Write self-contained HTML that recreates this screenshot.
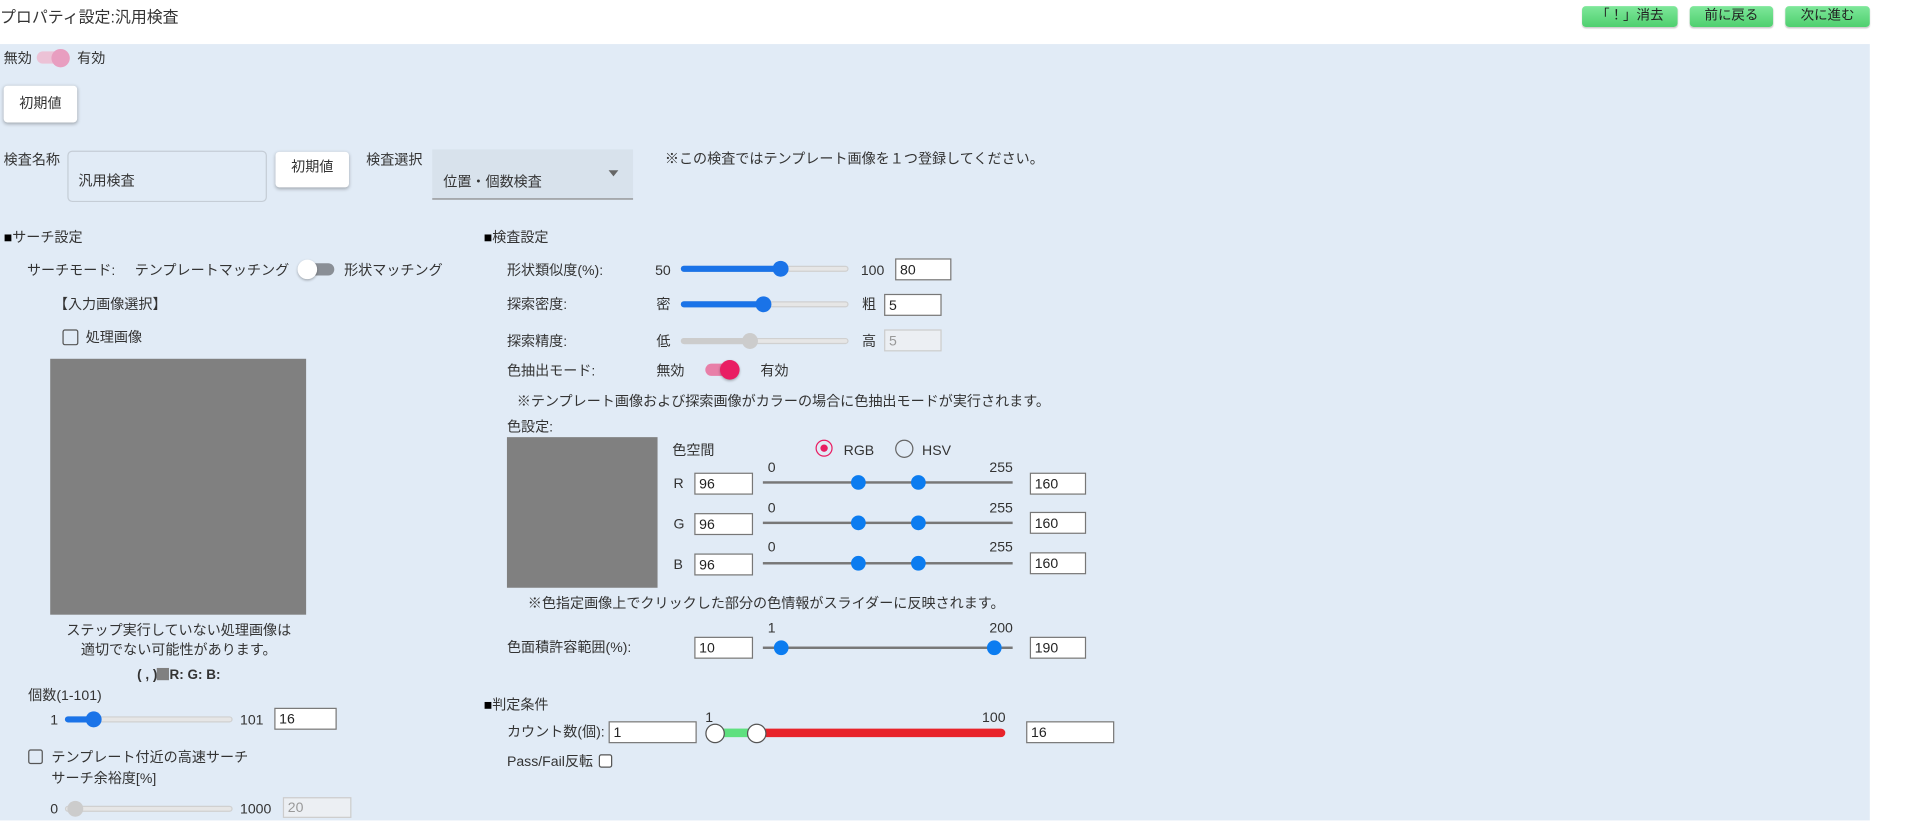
<!DOCTYPE html>
<html><head><meta charset="utf-8"><style>
html,body{margin:0;padding:0;background:#fff;width:1920px;height:826px;overflow:hidden}
#s{position:absolute;left:0;top:0;width:1568px;height:675px;transform:scale(1.22449);transform-origin:0 0;font-family:"Liberation Sans","Noto Sans CJK JP",sans-serif;font-size:11.5px;color:#333}
#s div,#s span{position:absolute;white-space:nowrap}
.t{line-height:14px;transform:translateY(-5.5px)}
.g{background:linear-gradient(#7ee79a,#4fcf6f);border-radius:3px;height:17px;top:5px;text-align:center;line-height:17px;color:#222;font-size:11px;box-shadow:0 1px 1px rgba(0,0,0,.2)}
.btn{background:#fff;border-radius:3px;box-shadow:0 1px 3px rgba(0,0,0,.3);text-align:center;color:#333}
.in{background:#fff;border:1px solid #777;height:16px;line-height:16px;padding-left:3px;box-sizing:border-box;font-size:11.5px;color:#222}
.dis{background:#eceff3;border-color:#ccc;color:#999}
.tr{height:5px;border-radius:3px;background:#e6e6e6;border:1px solid #d0d0d0;box-sizing:border-box}
.fill{height:5px;border-radius:3px;background:#1a73e8}
.th{width:13px;height:13px;border-radius:50%;background:#1a73e8}
.ln{height:2px;background:#777}
.dot{width:12px;height:12px;border-radius:50%;background:#0b7cf0}
.cb{width:11px;height:11px;border:1.5px solid #555;border-radius:2px;box-sizing:border-box}
b.sq{font-weight:normal;color:#000}
</style></head><body><div id="s">
<div class="t" style="left:0;top:13px;font-size:13px">プロパティ設定:汎用検査</div>
<div class="g" style="left:1292px;width:78px">「！」消去</div>
<div class="g" style="left:1380px;width:68px">前に戻る</div>
<div class="g" style="left:1458px;width:69px">次に進む</div>
<div style="left:0;top:36px;width:1527px;height:634px;background:#e1ebf6"></div>

<div class="t" style="left:3px;top:47px">無効</div>
<div style="left:30px;top:42px;width:26px;height:10px;border-radius:5px;background:#ecc2d6"></div>
<div style="left:42px;top:40px;width:15px;height:15px;border-radius:50%;background:#e89ec0"></div>
<div class="t" style="left:63px;top:47px">有効</div>
<div class="btn" style="left:3px;top:70px;width:60px;height:30px;line-height:30px">初期値</div>

<div class="t" style="left:3px;top:130px">検査名称</div>
<div style="left:55px;top:123px;width:163px;height:42px;border:1px solid #c5cdd6;border-radius:4px;box-sizing:border-box"></div>
<div class="t" style="left:64px;top:147px">汎用検査</div>
<div class="btn" style="left:225px;top:124px;width:60px;height:29px;line-height:27px">初期値</div>
<div class="t" style="left:299px;top:130px">検査選択</div>
<div style="left:353px;top:122px;width:164px;height:41px;background:#d8e2ec;border-bottom:1px solid #888;box-sizing:border-box"></div>
<div class="t" style="left:362px;top:148px">位置・個数検査</div>
<div style="left:497px;top:139px;width:0;height:0;border-left:4px solid transparent;border-right:4px solid transparent;border-top:5px solid #666"></div>
<div class="t" style="left:543px;top:129px">※この検査ではテンプレート画像を１つ登録してください。</div>

<div class="t" style="left:3px;top:193px"><b class="sq">■</b>サーチ設定</div>
<div class="t" style="left:395px;top:193px"><b class="sq">■</b>検査設定</div>

<div class="t" style="left:22px;top:220px">サーチモード:</div>
<div class="t" style="left:110px;top:220px">テンプレートマッチング</div>
<div style="left:247px;top:215px;width:26px;height:10px;border-radius:5px;background:#8a8f96"></div>
<div style="left:243px;top:212px;width:16px;height:16px;border-radius:50%;background:#fff;box-shadow:0 1px 2px rgba(0,0,0,.3)"></div>
<div class="t" style="left:281px;top:220px">形状マッチング</div>
<div class="t" style="left:44px;top:248px">【入力画像選択】</div>
<div class="cb" style="left:51px;top:269px;width:13px;height:13px"></div>
<div class="t" style="left:70px;top:275px">処理画像</div>
<div style="left:41px;top:293px;width:209px;height:209px;background:#808080"></div>
<div class="t" style="left:41px;top:514px;width:210px;text-align:center">ステップ実行していない処理画像は</div>
<div class="t" style="left:41px;top:530px;width:210px;text-align:center">適切でない可能性があります。</div>
<div class="t" style="left:41px;top:550px;width:210px;text-align:center;font-weight:bold;font-size:11px">( , )<span style="position:static;display:inline-block;width:10px;height:10px;background:#808080;vertical-align:-1px"></span>R: G: B:</div>
<div class="t" style="left:23px;top:567px">個数(1-101)</div>
<div class="t" style="left:41px;top:587px">1</div>
<div class="tr" style="left:53px;top:585px;width:137px"></div>
<div class="fill" style="left:53px;top:585px;width:24px"></div>
<div class="th" style="left:70px;top:581px"></div>
<div class="t" style="left:196px;top:587px">101</div>
<div class="in" style="left:224px;top:578px;width:51px;height:18px;line-height:18px">16</div>
<div class="cb" style="left:23px;top:612px;width:12px;height:12px"></div>
<div class="t" style="left:42px;top:618px">テンプレート付近の高速サーチ</div>
<div class="t" style="left:42px;top:635px">サーチ余裕度[%]</div>
<div class="t" style="left:41px;top:660px">0</div>
<div class="tr" style="left:53px;top:658px;width:137px"></div>
<div class="th" style="left:55px;top:654px;background:#ccc"></div>
<div class="t" style="left:196px;top:660px">1000</div>
<div class="in dis" style="left:231px;top:651px;width:56px;height:17px;line-height:17px">20</div>

<div class="t" style="left:414px;top:220px">形状類似度(%):</div>
<div class="t" style="left:535px;top:220px">50</div>
<div class="tr" style="left:556px;top:217px;width:137px"></div>
<div class="fill" style="left:556px;top:217px;width:82px"></div>
<div class="th" style="left:631px;top:213px"></div>
<div class="t" style="left:703px;top:220px">100</div>
<div class="in" style="left:731px;top:211px;width:46px;height:18px;line-height:18px">80</div>

<div class="t" style="left:414px;top:248px">探索密度:</div>
<div class="t" style="left:536px;top:248px">密</div>
<div class="tr" style="left:556px;top:246px;width:137px"></div>
<div class="fill" style="left:556px;top:246px;width:68px"></div>
<div class="th" style="left:617px;top:242px"></div>
<div class="t" style="left:704px;top:248px">粗</div>
<div class="in" style="left:722px;top:240px;width:47px;height:18px;line-height:18px">5</div>

<div class="t" style="left:414px;top:278px">探索精度:</div>
<div class="t" style="left:536px;top:278px">低</div>
<div class="tr" style="left:556px;top:276px;width:137px"></div>
<div class="fill" style="left:556px;top:276px;width:56px;background:#ccc"></div>
<div class="th" style="left:606px;top:272px;background:#ccc"></div>
<div class="t" style="left:704px;top:278px">高</div>
<div class="in dis" style="left:722px;top:269px;width:47px;height:18px;line-height:18px">5</div>

<div class="t" style="left:414px;top:302px">色抽出モード:</div>
<div class="t" style="left:536px;top:302px">無効</div>
<div style="left:576px;top:297px;width:26px;height:10px;border-radius:5px;background:#e87fa8"></div>
<div style="left:588px;top:294px;width:16px;height:16px;border-radius:50%;background:#e91e63;box-shadow:0 1px 2px rgba(0,0,0,.3)"></div>
<div class="t" style="left:621px;top:302px">有効</div>
<div class="t" style="left:422px;top:327px">※テンプレート画像および探索画像がカラーの場合に色抽出モードが実行されます。</div>
<div class="t" style="left:414px;top:348px">色設定:</div>
<div style="left:414px;top:357px;width:123px;height:123px;background:#808080"></div>
<div class="t" style="left:549px;top:367px">色空間</div>
<div style="left:666px;top:359px;width:14px;height:14px;border:1.5px solid #e91e63;border-radius:50%;box-sizing:border-box"></div>
<div style="left:670px;top:363px;width:6px;height:6px;background:#e91e63;border-radius:50%"></div>
<div class="t" style="left:689px;top:367px">RGB</div>
<div style="left:731px;top:359px;width:15px;height:15px;border:1.5px solid #666;border-radius:50%;box-sizing:border-box"></div>
<div class="t" style="left:753px;top:367px">HSV</div>

<div class="t" style="left:627px;top:381px">0</div><div class="t" style="left:808px;top:381px">255</div>
<div class="t" style="left:550px;top:394px">R</div>
<div class="in" style="left:567px;top:386px;width:48px;height:18px;line-height:18px">96</div>
<div class="ln" style="left:623px;top:393px;width:204px"></div>
<div class="dot" style="left:695px;top:388px"></div><div class="dot" style="left:744px;top:388px"></div>
<div class="in" style="left:841px;top:386px;width:46px;height:18px;line-height:18px">160</div>

<div class="t" style="left:627px;top:414px">0</div><div class="t" style="left:808px;top:414px">255</div>
<div class="t" style="left:550px;top:427px">G</div>
<div class="in" style="left:567px;top:419px;width:48px;height:18px;line-height:18px">96</div>
<div class="ln" style="left:623px;top:426px;width:204px"></div>
<div class="dot" style="left:695px;top:421px"></div><div class="dot" style="left:744px;top:421px"></div>
<div class="in" style="left:841px;top:418px;width:46px;height:18px;line-height:18px">160</div>

<div class="t" style="left:627px;top:446px">0</div><div class="t" style="left:808px;top:446px">255</div>
<div class="t" style="left:550px;top:460px">B</div>
<div class="in" style="left:567px;top:452px;width:48px;height:18px;line-height:18px">96</div>
<div class="ln" style="left:623px;top:459px;width:204px"></div>
<div class="dot" style="left:695px;top:454px"></div><div class="dot" style="left:744px;top:454px"></div>
<div class="in" style="left:841px;top:451px;width:46px;height:18px;line-height:18px">160</div>

<div class="t" style="left:431px;top:492px">※色指定画像上でクリックした部分の色情報がスライダーに反映されます。</div>
<div class="t" style="left:627px;top:512px">1</div><div class="t" style="left:808px;top:512px">200</div>
<div class="t" style="left:414px;top:528px">色面積許容範囲(%):</div>
<div class="in" style="left:567px;top:520px;width:48px;height:18px;line-height:18px">10</div>
<div class="ln" style="left:623px;top:528px;width:204px"></div>
<div class="dot" style="left:632px;top:523px"></div><div class="dot" style="left:806px;top:523px"></div>
<div class="in" style="left:841px;top:520px;width:46px;height:18px;line-height:18px">190</div>

<div class="t" style="left:395px;top:575px"><b class="sq">■</b>判定条件</div>
<div class="t" style="left:414px;top:597px">カウント数(個):</div>
<div class="in" style="left:497px;top:589px;width:72px;height:18px;line-height:18px">1</div>
<div class="t" style="left:576px;top:585px">1</div><div class="t" style="left:802px;top:585px">100</div>
<div style="left:584px;top:595px;width:34px;height:7px;background:#5fe07f"></div>
<div style="left:618px;top:595px;width:203px;height:7px;background:#e8232a;border-radius:0 4px 4px 0"></div>
<div style="left:576px;top:591px;width:14px;height:14px;border-radius:50%;background:#fff;border:1.5px solid #555"></div>
<div style="left:610px;top:591px;width:14px;height:14px;border-radius:50%;background:#fff;border:1.5px solid #555"></div>
<div class="in" style="left:838px;top:589px;width:72px;height:18px;line-height:18px">16</div>
<div class="t" style="left:414px;top:621px">Pass/Fail反転</div>
<div style="left:489px;top:616px;width:9px;height:9px;border:1px solid #555;border-radius:2px;background:#fff"></div>
</div></body></html>
